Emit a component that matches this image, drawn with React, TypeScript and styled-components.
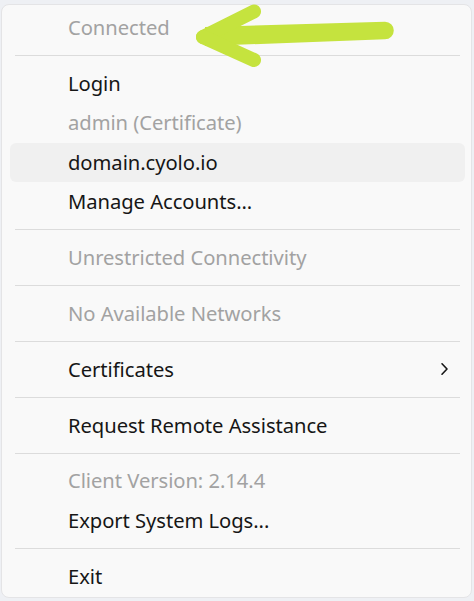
import React from "react";
import styled, { createGlobalStyle } from "styled-components";

const GlobalStyle = createGlobalStyle`
  html, body {
    margin: 0;
    padding: 0;
    background: #eef0f4;
  }
  body {
    font-family: "Noto Sans", "Open Sans", "DejaVu Sans", sans-serif;
  }
`;

const Stage = styled.div`
  position: relative;
  width: 474px;
  height: 601px;
  overflow: hidden;
  padding-top: 4px;
  padding-left: 1px;
  box-sizing: border-box;
`;

const Menu = styled.div`
  width: 471px;
  box-sizing: border-box;
  background: #f9f9f9;
  border: 1px solid #e4e4e6;
  border-radius: 8px;
  padding: 3.25px 0 1px 0;
  display: flex;
  flex-direction: column;
`;

const Item = styled.div<{ $disabled?: boolean; $hover?: boolean }>`
  height: 39.4px;
  box-sizing: border-box;
  margin: 0 6px 0 8px;
  padding: 0 16px 2px 58px;
  display: flex;
  align-items: center;
  justify-content: space-between;
  border-radius: 6px;
  font-size: 20.2px;
  letter-spacing: -0.05px;
  color: ${(p) => (p.$disabled ? "#a2a2a2" : "#161616")};
  background: ${(p) => (p.$hover ? "#f0f0f0" : "transparent")};
  white-space: nowrap;
`;

const Separator = styled.div`
  height: 16.5px;
  display: flex;
  align-items: center;
  margin: 0 11px 0 13px;
  &::before {
    content: "";
    flex: 1;
    height: 1px;
    background: #dcdcdc;
  }
`;

const Chevron = styled.svg`
  width: 9px;
  height: 14px;
  display: block;
`;

const ArrowOverlay = styled.svg`
  position: absolute;
  left: 0;
  top: 0;
  width: 474px;
  height: 601px;
  pointer-events: none;
`;

type Entry =
  | { kind: "item"; label: string; disabled?: boolean; hover?: boolean; sub?: boolean }
  | { kind: "sep" };

const entries: Entry[] = [
  { kind: "item", label: "Connected", disabled: true },
  { kind: "sep" },
  { kind: "item", label: "Login" },
  { kind: "item", label: "admin (Certificate)", disabled: true },
  { kind: "item", label: "domain.cyolo.io", hover: true },
  { kind: "item", label: "Manage Accounts..." },
  { kind: "sep" },
  { kind: "item", label: "Unrestricted Connectivity", disabled: true },
  { kind: "sep" },
  { kind: "item", label: "No Available Networks", disabled: true },
  { kind: "sep" },
  { kind: "item", label: "Certificates", sub: true },
  { kind: "sep" },
  { kind: "item", label: "Request Remote Assistance" },
  { kind: "sep" },
  { kind: "item", label: "Client Version: 2.14.4", disabled: true },
  { kind: "item", label: "Export System Logs..." },
  { kind: "sep" },
  { kind: "item", label: "Exit" },
];

export default function App() {
  return (
    <>
      <GlobalStyle />
      <Stage>
        <Menu>
          {entries.map((e, i) =>
            e.kind === "sep" ? (
              <Separator key={i} />
            ) : (
              <Item key={i} $disabled={e.disabled} $hover={e.hover}>
                <span>{e.label}</span>
                {e.sub && (
                  <Chevron viewBox="0 0 9 14">
                    <path d="M2 1.8 L7 7 L2 12.2" fill="none" stroke="#161616" strokeWidth="1.6" strokeLinecap="round" strokeLinejoin="round" />
                  </Chevron>
                )}
              </Item>
            )
          )}
        </Menu>
        <ArrowOverlay viewBox="0 0 474 601">
          <g fill="#c5e33e">
            <path d="M205 27 L385 21.7 A8.8 8.8 0 0 1 385 39.3 L205 46 Z" />
          </g>
          <g stroke="#c5e33e" strokeLinecap="round" strokeLinejoin="round" fill="none">
            <path d="M203 37 L254 11.5" strokeWidth="14" />
            <path d="M203 37 L254 60" strokeWidth="14" />
          </g>
        </ArrowOverlay>
      </Stage>
    </>
  );
}
